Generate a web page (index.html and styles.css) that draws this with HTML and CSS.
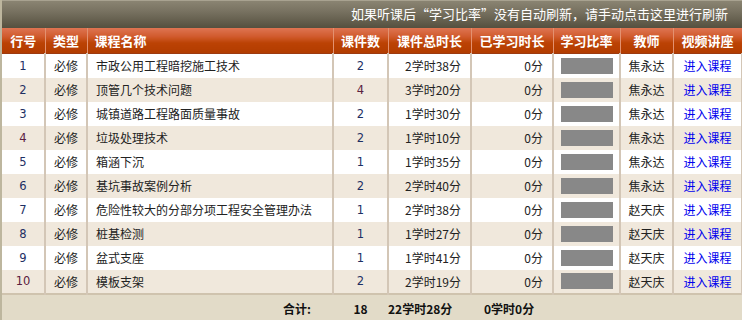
FILE: index.html
```html
<!DOCTYPE html>
<html lang="zh-CN">
<head>
<meta charset="utf-8">
<link rel="stylesheet" href="styles.css">
</head>
<body>
<div class="panel">
  <div class="topbar"><a class="refresh">如果听课后<span class="qo">“</span>学习比率<span class="qc">”</span>没有自动刷新，请手动点击这里进行刷新</a></div>
  <table class="grid">
    <colgroup>
      <col class="c1"><col class="c2"><col class="c3"><col class="c4"><col class="c5"><col class="c6"><col class="c7"><col class="c8"><col class="c9">
    </colgroup>
    <thead>
      <tr><th>行号</th><th>类型</th><th class="left">课程名称</th><th>课件数</th><th>课件总时长</th><th>已学习时长</th><th>学习比率</th><th>教师</th><th>视频讲座</th></tr>
    </thead>
    <tbody>
      <tr><td class="num">1</td><td>必修</td><td class="left">市政公用工程暗挖施工技术</td><td class="num">2</td><td class="right">2学时38分</td><td class="right">0分</td><td><span class="bar"></span></td><td>焦永达</td><td><a class="go">进入课程</a></td></tr>
      <tr><td class="num">2</td><td>必修</td><td class="left">顶管几个技术问题</td><td class="num red">4</td><td class="right">3学时20分</td><td class="right">0分</td><td><span class="bar"></span></td><td>焦永达</td><td><a class="go">进入课程</a></td></tr>
      <tr><td class="num">3</td><td>必修</td><td class="left">城镇道路工程路面质量事故</td><td class="num">2</td><td class="right">1学时30分</td><td class="right">0分</td><td><span class="bar"></span></td><td>焦永达</td><td><a class="go">进入课程</a></td></tr>
      <tr><td class="num red">4</td><td>必修</td><td class="left">垃圾处理技术</td><td class="num">2</td><td class="right">1学时10分</td><td class="right">0分</td><td><span class="bar"></span></td><td>焦永达</td><td><a class="go">进入课程</a></td></tr>
      <tr><td class="num">5</td><td>必修</td><td class="left">箱涵下沉</td><td class="num">1</td><td class="right">1学时35分</td><td class="right">0分</td><td><span class="bar"></span></td><td>焦永达</td><td><a class="go">进入课程</a></td></tr>
      <tr><td class="num">6</td><td>必修</td><td class="left">基坑事故案例分析</td><td class="num">2</td><td class="right">2学时40分</td><td class="right">0分</td><td><span class="bar"></span></td><td>焦永达</td><td><a class="go">进入课程</a></td></tr>
      <tr><td class="num">7</td><td>必修</td><td class="left">危险性较大的分部分项工程安全管理办法</td><td class="num">1</td><td class="right">2学时38分</td><td class="right">0分</td><td><span class="bar"></span></td><td>赵天庆</td><td><a class="go">进入课程</a></td></tr>
      <tr><td class="num">8</td><td>必修</td><td class="left">桩基检测</td><td class="num">1</td><td class="right">1学时27分</td><td class="right">0分</td><td><span class="bar"></span></td><td>赵天庆</td><td><a class="go">进入课程</a></td></tr>
      <tr><td class="num">9</td><td>必修</td><td class="left">盆式支座</td><td class="num">1</td><td class="right">1学时41分</td><td class="right">0分</td><td><span class="bar"></span></td><td>赵天庆</td><td><a class="go">进入课程</a></td></tr>
      <tr><td class="num red">10</td><td>必修</td><td class="left">模板支架</td><td class="num">2</td><td class="right">2学时19分</td><td class="right">0分</td><td><span class="bar"></span></td><td>赵天庆</td><td><a class="go">进入课程</a></td></tr>
    </tbody>
    <tfoot>
      <tr><td></td><td></td><td class="right total">合计:</td><td class="total">18</td><td class="right total">22学时28分</td><td class="total tl">0学时0分</td><td></td><td></td><td></td></tr>
    </tfoot>
  </table>
</div>
</body>
</html>
```

FILE: styles.css
```css
html, body {
  margin: 0;
  padding: 0;
  background: #ffffff;
}
body {
  font-family: "Noto Sans CJK SC", "DejaVu Sans", sans-serif;
  font-size: 12px;
  color: #222;
}
.panel {
  width: 742px;
  height: 320px;
  overflow: hidden;
  box-sizing: border-box;
  border-left: 2px solid #bdb69e;
}
.topbar {
  height: 28px;
  box-sizing: border-box;
  background: linear-gradient(to bottom, #8a8472 0%, #777160 40%, #55503f 100%);
  border-top: 1px solid #a8a290;
  text-align: right;
  padding-right: 14px;
  line-height: 26px;
}
.refresh {
  color: #ffffff;
  font-size: 13px;
  cursor: pointer;
}
.qo, .qc {
  display: inline-block;
  width: 13px;
}
.qo { text-align: right; }
.qc { text-align: left; }
.grid {
  width: 740px;
  border-collapse: collapse;
  table-layout: fixed;
}
.c1 { width: 43px; }
.c2 { width: 42px; }
.c3 { width: 246px; }
.c4 { width: 55px; }
.c5 { width: 83px; }
.c6 { width: 82px; }
.c7 { width: 67px; }
.c8 { width: 53px; }
.c9 { width: 69px; }
th {
  height: 25px;
  padding: 0;
  background: linear-gradient(to bottom, #de7452 0%, #d05a2c 35%, #bb4204 60%, #b23c00 100%);
  border-right: 1px solid #e39170;
  border-bottom: 1px solid #9c3a10;
  color: #ffffff;
  font-weight: bold;
  font-size: 13px;
  text-align: center;
  white-space: nowrap;
}
th.left {
  text-align: left;
  padding-left: 7px;
}
td {
  height: 24px;
  padding: 0;
  box-sizing: border-box;
  border-right: 2px solid #d3c6b6;
  text-align: center;
  white-space: nowrap;
  overflow: hidden;
}
tbody tr:nth-child(odd) td { background: #ffffff; }
tbody tr:nth-child(even) td { background: #f0e8dc; }
td.left {
  text-align: left;
  padding-left: 8px;
}
td.right {
  text-align: right;
  padding-right: 9px;
  font-family: "Noto Sans CJK SC", sans-serif;
}
td.num {
  font-family: "DejaVu Sans", sans-serif;
  font-size: 11.5px;
  color: #1e2f63;
}
td.num.red { color: #5a2040; }
.bar {
  display: block;
  width: 52px;
  height: 16px;
  margin: 0 auto;
  background: #888888;
}
.go {
  color: #0000ee;
  cursor: pointer;
}
tfoot td {
  height: 28px;
  background: #e2dbc8;
  border-top: 2px solid #cfc3ae;
  border-right: none;
  font-weight: bold;
  color: #111;
}
tfoot td.total { font-size: 12px; }
tfoot td.right { padding-right: 22px; }
tfoot td.tl { text-align: left; padding-left: 13px; }
```
